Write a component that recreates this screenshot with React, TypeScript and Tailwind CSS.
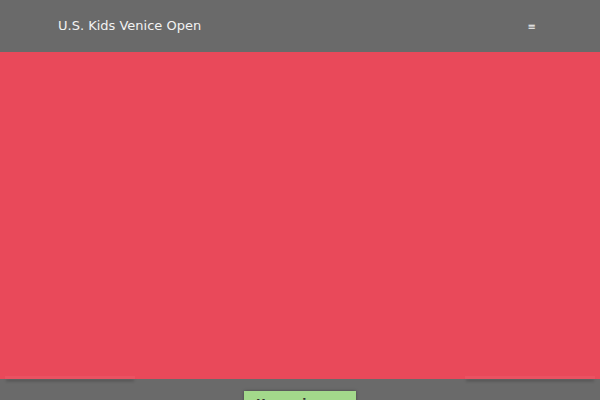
import React from "react";

export default function App() {
  return (
    <div className="w-[600px] h-[400px] overflow-hidden bg-[#6a6a6a] relative" style={{ fontFamily: '"DejaVu Sans", sans-serif' }}>
      <header className="h-[52px] flex items-center justify-between pl-[58px] pr-[64px] bg-[#6a6a6a]">
        <span className="text-[13px] text-[#f2f2f2]">U.S. Kids Venice Open</span>
        <span className="text-[10px] text-[#f2f2f2]">≡</span>
      </header>
      <div className="relative">
        <div className="h-[327px] bg-[#e9495a]"></div>
        <div className="absolute left-[5px] bottom-0 w-[130px] h-[3px] bg-[#ea5262] shadow-[0_3px_3px_-1px_rgba(0,0,0,0.45)]"></div>
        <div className="absolute right-[5px] bottom-0 w-[130px] h-[3px] bg-[#ea5262] shadow-[0_3px_3px_-1px_rgba(0,0,0,0.45)]"></div>
      </div>
      <div className="flex justify-center pt-[12px]">
        <div className="w-[112px] h-[40px] bg-[#a3d98b] shadow-[0_0_3px_rgba(0,0,0,0.35)] pt-[4px] pl-[12px] text-[12px] text-[#333] font-bold">
          Upcoming Events
        </div>
      </div>
    </div>
  );
}
